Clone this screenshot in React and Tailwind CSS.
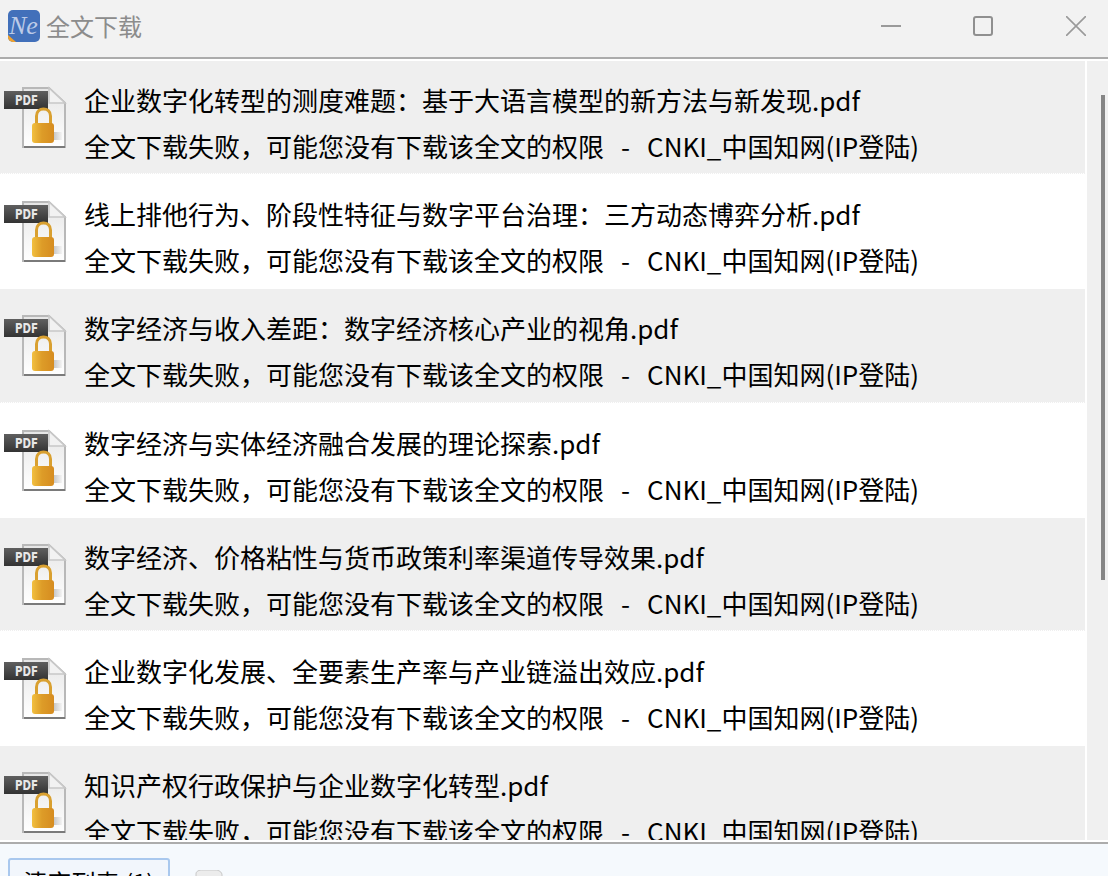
import React from 'react';

const files = [
  '企业数字化转型的测度难题：基于大语言模型的新方法与新发现.pdf',
  '线上排他行为、阶段性特征与数字平台治理：三方动态博弈分析.pdf',
  '数字经济与收入差距：数字经济核心产业的视角.pdf',
  '数字经济与实体经济融合发展的理论探索.pdf',
  '数字经济、价格粘性与货币政策利率渠道传导效果.pdf',
  '企业数字化发展、全要素生产率与产业链溢出效应.pdf',
  '知识产权行政保护与企业数字化转型.pdf',
];

const status = '全文下载失败，可能您没有下载该全文的权限';

const AppLogo = () => (
  <svg width="32" height="32" viewBox="0 0 32 32" className="shrink-0">
    <defs>
      <clipPath id="logoClip">
        <rect width="32" height="32" rx="5" />
      </clipPath>
    </defs>
    <g clipPath="url(#logoClip)">
      <rect width="32" height="32" fill="#4270ba" />
      <path d="M0 25 L8 32 L0 32 Z" fill="#f0a22e" />
      <text x="1" y="24" fontFamily="Liberation Serif" fontStyle="italic" fontSize="26" fill="#bccbe8">
        Ne
      </text>
    </g>
  </svg>
);

const PdfLockIcon = () => (
  <svg width="68" height="70" viewBox="0 0 68 70" className="shrink-0">
    <defs>
      <linearGradient id="bodyGrad" x1="0" y1="0" x2="0" y2="1">
        <stop offset="0" stopColor="#e6e6e6" />
        <stop offset="1" stopColor="#ffffff" />
      </linearGradient>
      <linearGradient id="tabGrad" x1="0" y1="0" x2="0" y2="1">
        <stop offset="0" stopColor="#5f5f5f" />
        <stop offset="1" stopColor="#333333" />
      </linearGradient>
      <linearGradient id="lockGrad" x1="0" y1="0" x2="1" y2="0">
        <stop offset="0" stopColor="#f2c040" />
        <stop offset="0.45" stopColor="#dd9c28" />
        <stop offset="1" stopColor="#d68c20" />
      </linearGradient>
      <linearGradient id="shadowGrad" x1="0" y1="0" x2="1" y2="0">
        <stop offset="0" stopColor="#bdbdbd" />
        <stop offset="1" stopColor="#f4f4f4" />
      </linearGradient>
    </defs>
    <path d="M23 8 H49 L65 23 V67 H23 Z" fill="url(#bodyGrad)" stroke="#b8b8b8" strokeWidth="2" />
    <path d="M49 8 V23 H65 Z" fill="#f2f2f2" stroke="#c8c8c8" strokeWidth="1.5" />
    <rect x="24" y="66" width="41" height="2" fill="#7a7a7a" />
    <rect x="52" y="52" width="10" height="8" fill="url(#shadowGrad)" />
    <rect x="4" y="11" width="44" height="18" fill="url(#tabGrad)" />
    <text x="15" y="25" textLength="23" lengthAdjust="spacingAndGlyphs" fontFamily="DejaVu Sans" fontWeight="700" fontSize="14" fill="#e8e8e8">
      PDF
    </text>
    <path d="M36.5 44 V36 C36.5 26.5 50.5 26.5 50.5 36 V44" fill="none" stroke="#d9a030" strokeWidth="3" />
    <rect x="32" y="43" width="22" height="20" rx="3" fill="url(#lockGrad)" />
  </svg>
);

const Row = ({ title, shaded }) => (
  <div className="h-[114.2px] shrink-0 pb-[1px]">
    <div
      className={`flex h-full w-[1085px] border-b border-dotted bg-clip-padding ${
        shaded ? 'border-[#efefef] bg-[#efefef]' : 'border-white bg-white'
      }`}
    >
      <div className="w-[84px] shrink-0 pt-[19px]">
        <PdfLockIcon />
      </div>
      <div className="flex flex-col pt-[16px] text-[26px] leading-[45px] whitespace-nowrap text-black">
        <div>{title}</div>
        <div className="mt-[1px]">
          {status}
          <span className="ml-[17px]">-</span>
          <span className="ml-[17px]">CNKI_中国知网(IP登陆)</span>
        </div>
      </div>
    </div>
  </div>
);

export default function App() {
  return (
    <div className="flex h-[876px] w-[1108px] flex-col overflow-hidden bg-white font-['Noto_Sans_CJK_SC','Liberation_Sans',sans-serif]">
      <header className="flex h-[59px] shrink-0 items-center border-b-2 border-[#acacac] bg-[#f2f2f2] pb-[5px]">
        <div className="ml-[8px] flex items-center gap-[6px]">
          <AppLogo />
          <span className="text-[24px] leading-none text-[#8c8c8c]">全文下载</span>
        </div>
        <div className="ml-auto flex items-center">
          <svg width="20" height="20" viewBox="0 0 20 20" className="mr-[72px]">
            <path d="M0 10 H20" stroke="#9a9a9a" strokeWidth="2" fill="none" />
          </svg>
          <svg width="20" height="20" viewBox="0 0 20 20" className="mr-[73px]">
            <rect x="1" y="1" width="18" height="18" rx="2" stroke="#909090" strokeWidth="2" fill="none" />
          </svg>
          <svg width="20" height="20" viewBox="0 0 20 20" className="mr-[22px]">
            <path d="M0 0 L20 20 M20 0 L0 20" stroke="#9a9a9a" strokeWidth="1.6" fill="none" />
          </svg>
        </div>
      </header>

      <main className="flex min-h-0 flex-1 bg-white py-[2px]">
        <div className="flex w-[1087px] shrink-0 flex-col overflow-hidden">
          {files.map((title, i) => (
            <Row key={title} title={title} shaded={i % 2 === 0} />
          ))}
        </div>
        <div className="w-[21px] shrink-0 bg-[#f0f0f0] pl-[14px] pt-[34px]">
          <div className="h-[485px] w-[4px] bg-[#858585]" />
        </div>
      </main>

      <footer className="flex h-[34px] shrink-0 items-start overflow-hidden border-t-2 border-[#acacac] bg-[#f5f9fd] pl-[8px] pt-[14px]">
        <button className="h-[40px] w-[162px] shrink-0 rounded-[3px] border-2 border-[#a9c8ee] bg-[#f2f6fc] text-[24px] leading-[44px] text-black">
          清空列表 (1)
        </button>
        <svg width="30" height="24" viewBox="0 0 30 24" className="ml-[25px] mt-[12px] shrink-0">
          <path d="M1 4 C1 1 4 0 8 0 H20 C24 0 27 2 27 5 V24 H1 Z" fill="#ececec" stroke="#c8c8c8" strokeWidth="1" />
        </svg>
      </footer>
    </div>
  );
}
